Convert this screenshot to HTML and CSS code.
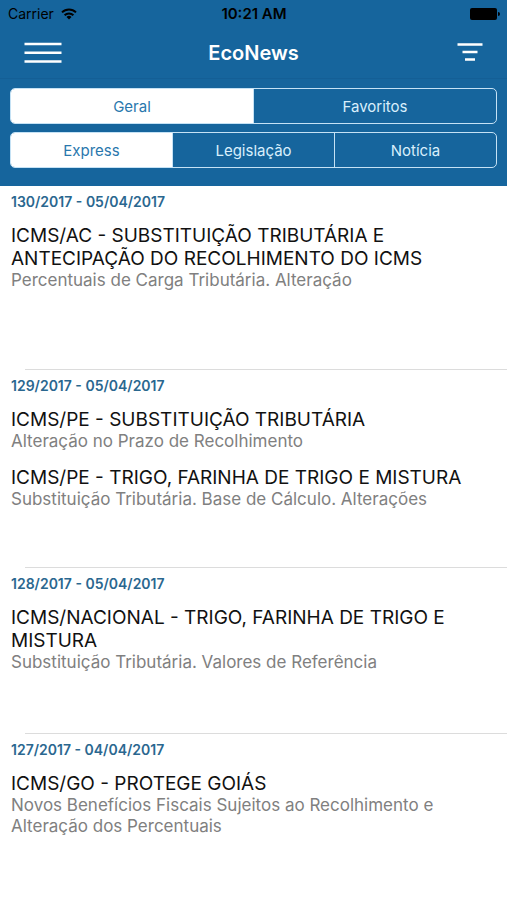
FILE: index.html
```
<!DOCTYPE html>
<html lang="pt-BR">
<head>
    <meta charset="UTF-8">
    <meta name="viewport" content="width=device-width, initial-scale=1.0">
    <title>EcoNews</title>
    <link rel="stylesheet" href="styles.css">
</head>
<body>
    <header class="header">
        <!-- Barra de status -->
        <div class="status-bar">
            <div class="carrier">
                <span>Carrier</span>
                <svg class="wifi" viewBox="0 0 16 12" width="16" height="12" fill="none" stroke="#000" stroke-width="2">
                    <path d="M1 4.4a10 10 0 0 1 14 0"/>
                    <path d="M3.6 7.2a6.3 6.3 0 0 1 8.8 0"/>
                    <path d="M8 11.6 5.5 9a3.6 3.6 0 0 1 5 0z" fill="#000" stroke="none"/>
                </svg>
            </div>
            <div class="time">10:21 AM</div>
            <div class="battery">
                <svg viewBox="0 0 30 12" width="30" height="12">
                    <rect width="27" height="12" rx="2"/>
                    <path d="M28 4a2 2 0 0 1 0 4z"/>
                </svg>
            </div>
        </div>

        <!-- Barra de navegação -->
        <nav class="nav-bar">
            <button class="icon-btn" type="button" aria-label="Menu">
                <svg viewBox="0 0 38 22" width="38" height="22" stroke="#fff" stroke-width="2.4">
                    <path d="M0.5 2h37M0.5 10.700h37M0.5 19.500h37"/>
                </svg>
            </button>
            <h1 class="nav-title">EcoNews</h1>
            <button class="icon-btn icon-btn-right" type="button" aria-label="Filtrar">
                <svg viewBox="0 0 26 20" width="26" height="20" stroke="#fff" stroke-width="2.6">
                    <path d="M0.500 1.500h25M5.500 9h15M8 16.500h10"/>
                </svg>
            </button>
        </nav>

        <div class="filters">
            <div class="segmented">
                <button class="segment active" type="button">Geral</button>
                <button class="segment" type="button">Favoritos</button>
            </div>
            <div class="segmented">
                <button class="segment active" type="button">Express</button>
                <button class="segment" type="button">Legislação</button>
                <button class="segment" type="button">Notícia</button>
            </div>
        </div>
    </header>

    <!-- Lista de boletins -->
    <main class="news-list">
        <article class="news-item news-item-medium">
            <p class="news-date">130/2017 - 05/04/2017</p>
            <section class="news-entry">
                <h2>ICMS/AC - SUBSTITUIÇÃO TRIBUTÁRIA E ANTECIPAÇÃO DO RECOLHIMENTO DO ICMS</h2>
                <p>Percentuais de Carga Tributária. Alteração</p>
            </section>
        </article>

        <article class="news-item news-item-large">
            <p class="news-date">129/2017 - 05/04/2017</p>
            <section class="news-entry">
                <h2>ICMS/PE - SUBSTITUIÇÃO TRIBUTÁRIA</h2>
                <p>Alteração no Prazo de Recolhimento</p>
            </section>
            <section class="news-entry">
                <h2>ICMS/PE - TRIGO, FARINHA DE TRIGO E MISTURA</h2>
                <p>Substituição Tributária. Base de Cálculo. Alterações</p>
            </section>
        </article>

        <article class="news-item">
            <p class="news-date">128/2017 - 05/04/2017</p>
            <section class="news-entry">
                <h2>ICMS/NACIONAL - TRIGO, FARINHA DE TRIGO E MISTURA</h2>
                <p>Substituição Tributária. Valores de Referência</p>
            </section>
        </article>

        <article class="news-item">
            <p class="news-date">127/2017 - 04/04/2017</p>
            <section class="news-entry">
                <h2>ICMS/GO - PROTEGE GOIÁS</h2>
                <p>Novos Benefícios Fiscais Sujeitos ao Recolhimento e Alteração dos Percentuais</p>
            </section>
        </article>
    </main>
</body>
</html>
```
FILE: styles.css
```
* {
    margin: 0;
    padding: 0;
    box-sizing: border-box;
}

body {
    font-family: Inter, "Helvetica Neue", "Liberation Sans", sans-serif;
    background-color: #fff;
    color: #111;
    min-height: 100vh;
}

button {
    font-family: inherit;
    border: none;
    background: none;
    cursor: pointer;
}

.header {
    background-color: #16659d;
    padding-bottom: 18px;
}

/* Barra de status */
.status-bar {
    display: grid;
    grid-template-columns: 1fr auto 1fr;
    align-items: center;
    height: 27px;
    padding: 0 7px 0 8px;
    font-size: 14px;
    color: #000;
}

.carrier {
    display: flex;
    align-items: center;
    gap: 7px;
}

.time {
    font-size: 15px;
    font-weight: 600;
}

.battery {
    display: flex;
    justify-content: flex-end;
}

/* Barra de navegação */
.nav-bar {
    display: grid;
    grid-template-columns: 1fr auto 1fr;
    align-items: center;
    height: 52px;
    padding: 0 24px;
    border-bottom: 1px solid #145f96;
}

.nav-title {
    font-size: 20px;
    font-weight: 600;
    color: #fff;
}

.icon-btn {
    display: flex;
    justify-self: start;
}

.icon-btn-right {
    justify-self: end;
}

/* Controles segmentados */
.filters {
    display: flex;
    flex-direction: column;
    gap: 8px;
    padding: 9px 10px 0;
}

.segmented {
    display: flex;
    height: 36px;
    border: 1px solid #c5e2f5;
    border-radius: 5px;
    overflow: hidden;
}

.segment {
    flex: 1;
    font-size: 15px;
    color: #d9effc;
}

.segment + .segment {
    border-left: 1px solid #c5e2f5;
}

.segment.active {
    background-color: #fff;
    color: #2a77ad;
}

/* Lista */
.news-item {
    position: relative;
    min-height: 166px;
    padding: 8px 11px 12px;
}

.news-item-medium {
    min-height: 184px;
}

.news-item-large {
    min-height: 198px;
}

/* separador recuado */
.news-item + .news-item::before {
    content: "";
    position: absolute;
    top: -1px;
    left: 25px;
    right: 0;
    height: 1px;
    background-color: #dcdcdc;
}

.news-date {
    margin-bottom: 14px;
    font-size: 14px;
    line-height: 16px;
    font-weight: 600;
    color: #2a678f;
}

.news-entry + .news-entry {
    margin-top: 14px;
}

.news-entry h2 {
    font-size: 19px;
    line-height: 23px;
    font-weight: 400;
}

.news-entry p {
    font-size: 17px;
    line-height: 21px;
    color: #808080;
}
```
